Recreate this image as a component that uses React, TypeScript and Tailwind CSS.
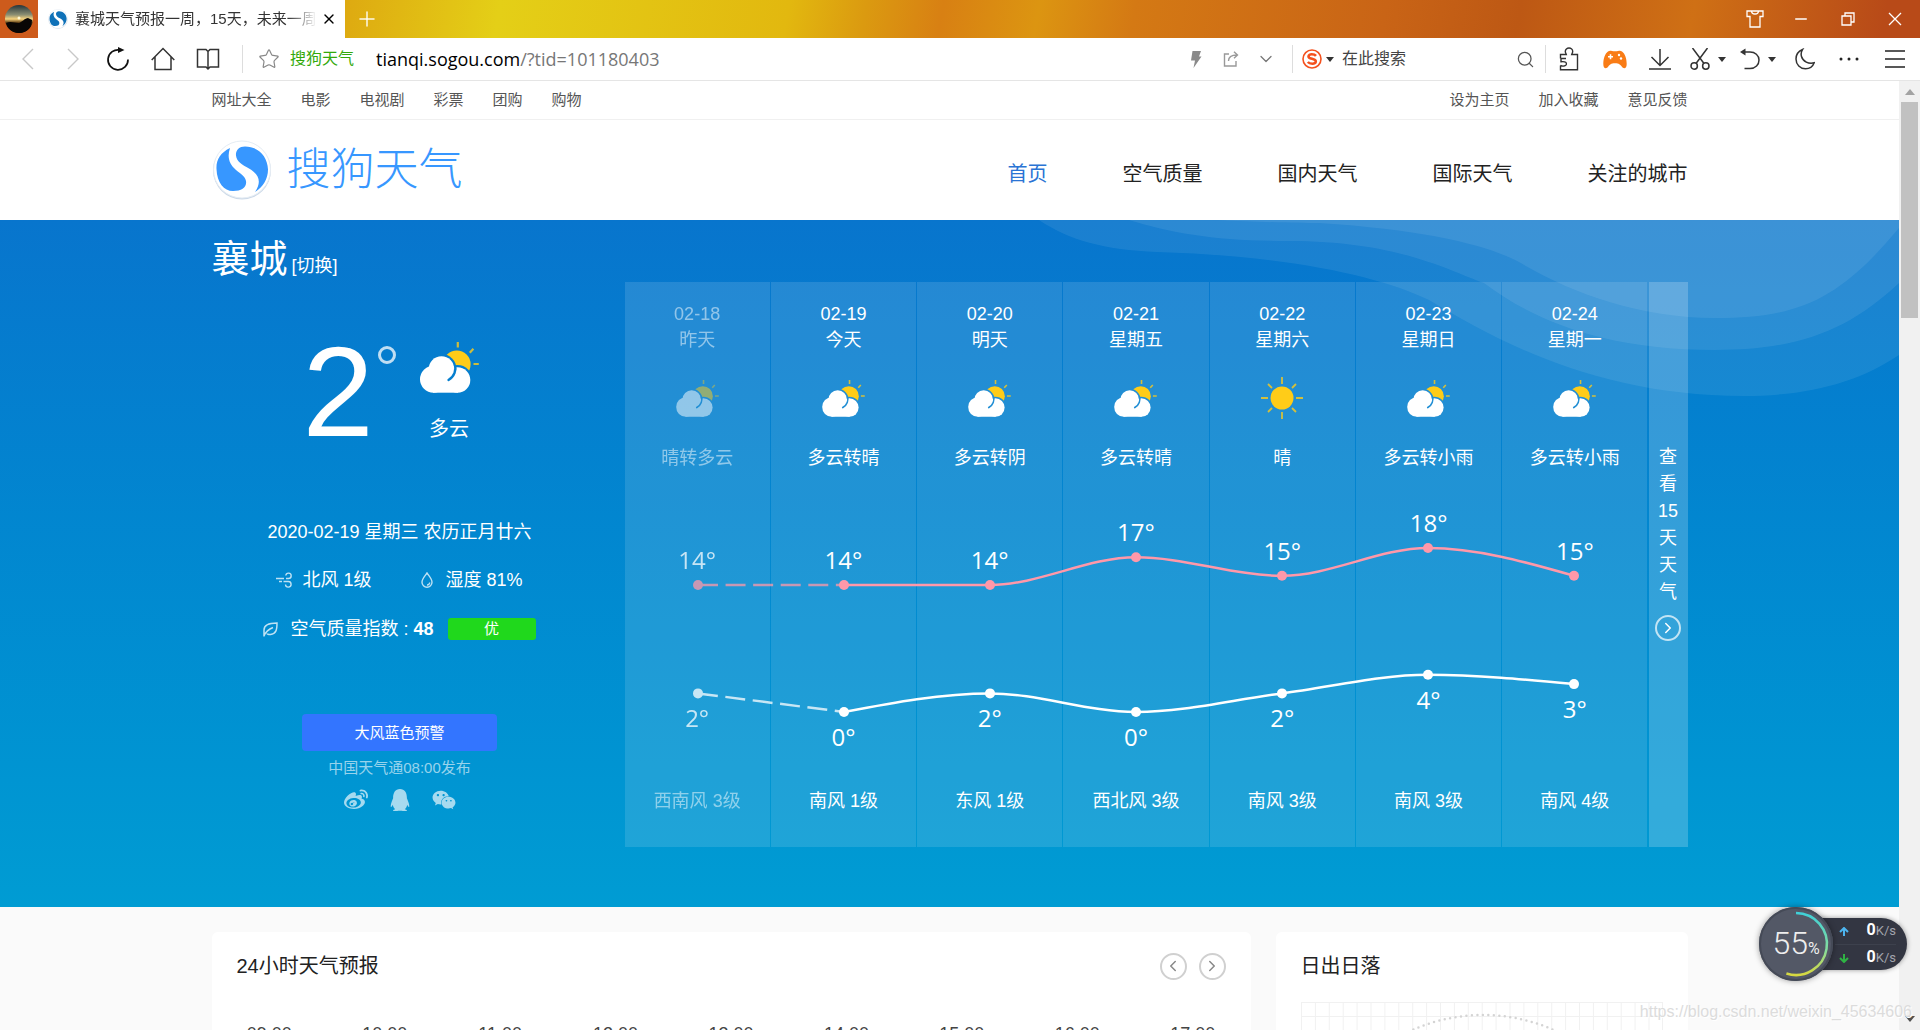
import { useId } from "react";
import type { ReactNode } from "react";
import {
  ChevronDown,
  ChevronLeft,
  ChevronRight,
  Minus,
  Plus,
  Search,
  Star,
  X,
} from "lucide-react";
import { FaQq, FaWeibo, FaWeixin } from "react-icons/fa";

type Sky = "cloudy" | "sunny";

type Day = {
  date: string;
  label: string;
  sky: Sky;
  text: string;
  high: number;
  low: number;
  wind: string;
};

const DAYS: Day[] = [
  { date: "02-18", label: "昨天", sky: "cloudy", text: "晴转多云", high: 14, low: 2, wind: "西南风 3级" },
  { date: "02-19", label: "今天", sky: "cloudy", text: "多云转晴", high: 14, low: 0, wind: "南风 1级" },
  { date: "02-20", label: "明天", sky: "cloudy", text: "多云转阴", high: 14, low: 2, wind: "东风 1级" },
  { date: "02-21", label: "星期五", sky: "cloudy", text: "多云转晴", high: 17, low: 0, wind: "西北风 3级" },
  { date: "02-22", label: "星期六", sky: "sunny", text: "晴", high: 15, low: 2, wind: "南风 3级" },
  { date: "02-23", label: "星期日", sky: "cloudy", text: "多云转小雨", high: 18, low: 4, wind: "南风 3级" },
  { date: "02-24", label: "星期一", sky: "cloudy", text: "多云转小雨", high: 15, low: 3, wind: "南风 4级" },
];

const SITE_LINKS = ["网址大全", "电影", "电视剧", "彩票", "团购", "购物"];
const USER_LINKS = ["设为主页", "加入收藏", "意见反馈"];
const MAIN_NAV = ["首页", "空气质量", "国内天气", "国际天气", "关注的城市"];
const HOURS = ["09:00", "10:00", "11:00", "12:00", "13:00", "14:00", "15:00", "16:00", "17:00"];

// plot geometry, shared by the svg lines and the html labels
const PLOT_W = 1023;
const PLOT_H = 315;
const highY = (t: number) => 113 - (t - 14) * 9.25;
const lowY = (t: number) => 240 - t * 9.3;
const dayX = (i: number) => ((i + 0.5) * PLOT_W) / DAYS.length;

type Point = { x: number; y: number };

// monotone cubic, so the curve never overshoots a day's value
function smoothPath(pts: Point[]) {
  const n = pts.length;
  const slope = pts.slice(1).map((p, i) => (p.y - pts[i].y) / (p.x - pts[i].x));
  const tan = pts.map((_, i) => {
    if (i === 0 || i === n - 1) return 0;
    const a = slope[i - 1];
    const b = slope[i];
    return a * b <= 0 ? 0 : (2 * a * b) / (a + b);
  });
  tan[0] = (3 * slope[0] - tan[1]) / 2;
  tan[n - 1] = (3 * slope[n - 2] - tan[n - 2]) / 2;

  let d = `M${pts[0].x},${pts[0].y}`;
  for (let i = 0; i < n - 1; i++) {
    const dx = (pts[i + 1].x - pts[i].x) / 3;
    d += ` C${pts[i].x + dx},${pts[i].y + tan[i] * dx} ${pts[i + 1].x - dx},${pts[i + 1].y - tan[i + 1] * dx} ${pts[i + 1].x},${pts[i + 1].y}`;
  }
  return d;
}

function CloudSunIcon({ className }: { className: string }) {
  const id = useId();
  return (
    <svg viewBox="0 0 59 51" className={className} aria-hidden="true">
      <mask id={`${id}s`}>
        <rect width="59" height="51" fill="#fff" />
        <circle cx="21.5" cy="27" r="15" />
        <circle cx="37.5" cy="38" r="15" />
      </mask>
      <mask id={`${id}c`}>
        <rect width="59" height="51" fill="#fff" />
        <path d="M34.800 22c1.800 6-.3 12.500-6.300 16" fill="none" stroke="#000" strokeWidth="2.400" strokeLinecap="round" />
      </mask>
      <g fill="#ffcc18" stroke="#ffcc18">
        <circle cx="36.800" cy="22.300" r="13.800" stroke="none" mask={`url(#${id}s)`} />
        <path d="M37.800 0v5.500M49.800 10.800l3.600-4M53.500 22h5.300" strokeWidth="2.200" strokeOpacity=".8" fill="none" />
      </g>
      <g fill="#fff" mask={`url(#${id}c)`}>
        <circle cx="13.500" cy="37.200" r="13.500" />
        <circle cx="21.500" cy="27" r="12.800" />
        <circle cx="37.500" cy="38" r="12.800" />
        <path d="M13 30h25v20.700H13z" />
      </g>
    </svg>
  );
}

function SunIcon({ className }: { className: string }) {
  return (
    <svg viewBox="0 0 42 42" className={className} aria-hidden="true">
      <circle cx="21" cy="21" r="11.500" fill="#ffcc18" />
      <path
        d="M21 0v7M21 35v7M0 21h7M35 21h7M7 7l4 4M31 31l4 4M7 35l4-4M31 11l4-4"
        stroke="#ffcc18"
        strokeOpacity=".8"
        strokeWidth="1.800"
      />
    </svg>
  );
}

function SogouMark({ className, color }: { className: string; color: string }) {
  return (
    <svg viewBox="0 0 60 60" className={className} aria-hidden="true">
      <circle cx="30" cy="30.500" r="29" fill="#ccd9e8" />
      <circle cx="30" cy="29.500" r="28.500" fill="#fff" stroke="#e6edf4" />
      <path
        fill={color}
        d="M18 8C8 13 4 20 4.500 29 5 43 12 51 21 51c9 0 14-4 13-10-1-5-5-7-10-11-7-6-9-13-6-22zM33 6.500c-6 0-9.500 4-9 9 .5 6 6 9 13 13 10 6 13 13 6 23.500 8-5 13-13 13-22.500C55.500 16 46 6.500 33 6.500z"
      />
    </svg>
  );
}

function Caret() {
  return (
    <svg viewBox="0 0 8 5" className="h-[5px] w-2" aria-hidden="true">
      <path d="M0 0h8L4 5z" fill="#333" />
    </svg>
  );
}

function ToolButton({ label, width = "w-[46px]", children }: { label: string; width?: string; children: ReactNode }) {
  return (
    <button type="button" aria-label={label} className={`flex h-full shrink-0 items-center justify-center ${width}`}>
      {children}
    </button>
  );
}

function TabBar() {
  return (
    <div className="flex h-[38px] shrink-0 bg-[linear-gradient(100deg,#dda510_17%,#e4cf17_26%,#e2b80f_41%,#db9a10_45%,#d88013_49%,#dc9511_54%,#d47914_59%,#c96416_72%,#bd5814_79%,#cf7015_88%,#b84a18_98%)]">
      <button type="button" aria-label="账号" className="flex w-[38px] items-center justify-center bg-[#cd5b1c]">
        <svg viewBox="0 0 28 28" className="size-7" aria-hidden="true">
          <defs>
            <linearGradient id="sunset" x2="0" y2="1">
              <stop offset="0" stopColor="#24343a" />
              <stop offset=".35" stopColor="#8c8f73" />
              <stop offset=".5" stopColor="#f6d27c" />
              <stop offset=".62" stopColor="#6b4a1c" />
              <stop offset=".75" stopColor="#0c0a08" />
            </linearGradient>
          </defs>
          <circle cx="14" cy="14" r="14" fill="url(#sunset)" />
          <path d="M1 18c5-2 8 0 13 0 3-1 6-5 9-5l4 2c0 8-6 13-13 13C8 28 3 24 1 18z" fill="#080605" />
          <circle cx="14" cy="13" r="1.500" fill="#fff7d0" />
        </svg>
      </button>

      <div className="flex w-[307px] items-center bg-white pl-[10px]">
        <SogouMark className="size-5 shrink-0" color="#0f71b8" />
        <span className="ml-[7px] w-[242px] overflow-hidden text-[15px] whitespace-nowrap text-[#333] [mask-image:linear-gradient(90deg,#000_88%,transparent)]">
          襄城天气预报一周，15天，未来一周
        </span>
        <button type="button" aria-label="关闭标签页" className="ml-1">
          <X className="size-4 text-black" strokeWidth={2} />
        </button>
      </div>
      <button type="button" aria-label="新建标签页" className="ml-2.5">
        <Plus className="size-6 text-white/90" strokeWidth={1.5} absoluteStrokeWidth />
      </button>

      <div className="ml-auto flex pr-0.5 text-white">
        <ToolButton label="皮肤">
          <svg viewBox="0 0 18 18" className="size-[18px]" fill="none" stroke="currentColor" strokeWidth="1.300" aria-hidden="true">
            <path d="M1 1h16v5.500h-3V17H4V6.500H1zM5.500 1c0 4 7 4 7 0" />
          </svg>
        </ToolButton>
        <ToolButton label="最小化">
          <Minus className="size-[18px]" strokeWidth={2} />
        </ToolButton>
        <ToolButton label="还原" width="w-[48px]">
          <svg viewBox="0 0 14 14" className="size-3.5" fill="none" stroke="currentColor" strokeWidth="1.300" aria-hidden="true">
            <path d="M1 4h9v9H1zM4 4V1h9v9h-3" />
          </svg>
        </ToolButton>
        <ToolButton label="关闭">
          <svg viewBox="0 0 14 14" className="size-3.5" stroke="currentColor" strokeWidth="1.300" aria-hidden="true">
            <path d="M1 1l12 12M13 1L1 13" />
          </svg>
        </ToolButton>
      </div>
    </div>
  );
}

function Toolbar() {
  return (
    <div className="flex h-[43px] shrink-0 items-center border-b border-[#e5e5e5] bg-white pr-0.5 pl-[5px] text-[#333]">
      <ToolButton label="后退" width="w-[45px]">
        <svg viewBox="0 0 12 22" className="h-[22px] w-3" fill="none" stroke="#c8c8c8" strokeWidth="1.400" aria-hidden="true">
          <path d="M11 1L1 11l10 10" />
        </svg>
      </ToolButton>
      <ToolButton label="前进" width="w-[45px]">
        <svg viewBox="0 0 12 22" className="h-[22px] w-3" fill="none" stroke="#c8c8c8" strokeWidth="1.400" aria-hidden="true">
          <path d="M1 1l10 10L1 21" />
        </svg>
      </ToolButton>
      <ToolButton label="刷新" width="w-[45px]">
        <svg viewBox="0 0 24 24" className="size-6" fill="none" stroke="#111" strokeWidth="1.700" aria-hidden="true">
          <path d="M22 12.500A10 10 0 1 1 14 3" />
          <path d="M12 0l6.500 3L12 6z" fill="#111" stroke="none" />
        </svg>
      </ToolButton>
      <ToolButton label="主页" width="w-[45px]">
        <svg viewBox="0 0 24 24" className="size-6" fill="none" stroke="currentColor" strokeWidth="1.500" aria-hidden="true">
          <path d="M.700 13L12 1.500 23.300 13M4 10v12.500h16V10" />
        </svg>
      </ToolButton>
      <ToolButton label="收藏夹" width="w-[45px]">
        <svg viewBox="0 0 24 24" className="size-6" fill="none" stroke="currentColor" strokeWidth="1.500" aria-hidden="true">
          <path d="M12 4.500L10 2.500H1.500V20H10l2 2 2-2h8.500V2.500H14zM12 4.500V22" />
        </svg>
      </ToolButton>
      <span className="ml-3 h-7 w-px bg-[#ddd]" />

      <button type="button" aria-label="收藏" className="ml-[15px]">
        <Star className="size-[22px] text-[#888]" strokeWidth={1.3} strokeLinejoin="miter" />
      </button>
      <span className="ml-2.5 text-base text-[#33a90b]">搜狗天气</span>
      <div className="ml-[22px] flex-1 font-[Open_Sans,Noto_Sans_CJK_SC,sans-serif] text-lg whitespace-nowrap text-[#777]">
        <span className="text-black">tianqi.sogou.com</span>/?tid=101180403
      </div>

      <ToolButton label="极速模式" width="w-[35px]">
        <svg viewBox="0 0 12 17" className="h-[17px] w-3" fill="#8a8a8a" aria-hidden="true">
          <path d="M2.500 0H11L9 5.500h2.500L3.500 17 5 9.500H1z" />
        </svg>
      </ToolButton>
      <ToolButton label="分享" width="w-[35px]">
        <svg viewBox="0 0 16 16" className="size-4" fill="none" stroke="#999" strokeWidth="1.400" aria-hidden="true">
          <path d="M6 3H1.500v12H13v-5M5.500 10c0-4 3-6 8.500-6M11 .700L14.500 4 11 7.300" />
        </svg>
      </ToolButton>
      <ToolButton label="更多地址" width="w-[35px]">
        <ChevronDown className="size-5 text-[#777]" strokeWidth={1.5} />
      </ToolButton>
      <span className="ml-[9px] h-7 w-px bg-[#ddd]" />

      <button type="button" aria-label="选择搜索引擎" className="ml-[9px] flex items-center gap-1">
        <svg viewBox="0 0 20 20" className="size-5" fill="none" stroke="#f4511e" aria-hidden="true">
          <circle cx="10" cy="10" r="9" strokeWidth="1.600" />
          <path d="M14 6.800C12.500 5 6.500 4.300 6.500 7.500c0 3 7.300 1.600 7.300 4.900 0 3.300-6.300 2.600-8 .6" strokeWidth="2.600" />
        </svg>
        <Caret />
      </button>
      <input
        type="text"
        aria-label="搜索"
        defaultValue="在此搜索"
        className="ml-2 w-[174px] bg-transparent text-base text-[#444] outline-none"
      />
      <button type="button" aria-label="开始搜索">
        <Search className="size-[19px] text-[#555]" strokeWidth={1.6} />
      </button>
      <span className="ml-2.5 h-7 w-px bg-[#ddd]" />

      <ToolButton label="扩展">
        <svg viewBox="0 0 20 24" className="h-6 w-5" fill="none" stroke="currentColor" strokeWidth="1.400" aria-hidden="true">
          <path d="M1.500 11.500V7.500h5.800c-.3-1-1-1.700-1-3C6.300 2.700 8 1 10 1s3.700 1.700 3.700 3.500c0 1.300-.7 2-1 3h5.800v15.300h-17v-4.300" />
          <path d="M1.500 11.500H7M2 11.500v3.300c5-.6 5.800 1 5.300 2.700-.6 1.800-3.600 2-5.800 1" />
        </svg>
      </ToolButton>
      <ToolButton label="游戏" width="w-[45px]">
        <svg viewBox="0 0 24 19" className="h-[19px] w-6" aria-hidden="true">
          <path
            d="M5 1.500C7 0 8 1.200 12 1.200S17 0 19 1.500c3 2 4.700 7 4.700 12.500 0 5-3.200 5.200-5 2.500-1.500-2-2.500-3.300-6.700-3.300s-5.200 1.300-6.700 3.300C3.500 19.200.3 19 .3 14 .3 8.500 2 3.500 5 1.500z"
            fill="#f97c16"
          />
          <path d="M7.500 4.200v5M5 6.700h5" stroke="#fff" strokeWidth="1.600" />
          <circle cx="16" cy="5" r="1.200" fill="#fff" />
          <circle cx="18" cy="8.500" r="1.200" fill="#fff" />
        </svg>
      </ToolButton>
      <ToolButton label="下载">
        <svg viewBox="0 0 22 22" className="size-[22px]" fill="none" stroke="currentColor" strokeWidth="1.500" aria-hidden="true">
          <path d="M11 1v16M2.500 9l8.500 8.500L19.500 9M0 21h22" />
        </svg>
      </ToolButton>
      <ToolButton label="截图" width="w-[50px]">
        <span className="flex items-center gap-2">
          <svg viewBox="0 0 20 22" className="h-[22px] w-5" fill="none" stroke="currentColor" strokeWidth="1.500" aria-hidden="true">
            <path d="M2.500 0L14 15.500M17.500 0L6 15.500" />
            <circle cx="4.200" cy="18" r="3.200" />
            <circle cx="15.800" cy="18" r="3.200" />
          </svg>
          <Caret />
        </span>
      </ToolButton>
      <ToolButton label="撤销" width="w-[50px]">
        <span className="flex items-center gap-2">
          <svg viewBox="0 0 20 22" className="h-[22px] w-5" fill="none" stroke="currentColor" strokeWidth="1.500" aria-hidden="true">
            <path d="M3 4h7c5 0 9 3.300 9 8s-3.500 8.500-9 8.500H4.500" />
            <path d="M5.500.500v7L0 4z" fill="currentColor" stroke="none" />
          </svg>
          <Caret />
        </span>
      </ToolButton>
      <ToolButton label="夜间模式" width="w-[43px]">
        <svg viewBox="0 0 20 22" className="h-[22px] w-5" fill="none" stroke="currentColor" strokeWidth="1.500" aria-hidden="true">
          <path d="M7.500 1.500C3.500 3.200 1 6.700 1 11c0 5.500 4.200 9.800 9.500 9.800 4 0 7.300-2.300 8.700-6-5.700 1.500-11.200-1.300-12.700-6.300-.7-2.500-.3-5 1-7z" />
        </svg>
      </ToolButton>
      <ToolButton label="更多">
        <svg viewBox="0 0 20 4" className="h-1 w-5" fill="#222" aria-hidden="true">
          <circle cx="2" cy="2" r="1.500" />
          <circle cx="10" cy="2" r="1.500" />
          <circle cx="18" cy="2" r="1.500" />
        </svg>
      </ToolButton>
      <ToolButton label="菜单">
        <svg viewBox="0 0 20 18" className="h-[18px] w-5" stroke="#222" strokeWidth="1.500" aria-hidden="true">
          <path d="M0 1h20M0 9h20M0 17h20" />
        </svg>
      </ToolButton>
    </div>
  );
}

function SiteHeader() {
  return (
    <header className="bg-white">
      <div className="border-b border-[#f0f0f0]">
        <div className="mx-auto flex h-[38px] w-full max-w-[1476px] items-center justify-between text-[15px] text-[#555]">
          <nav className="flex gap-[29px]">
            {SITE_LINKS.map((l) => (
              <a key={l} href="#">{l}</a>
            ))}
          </nav>
          <nav className="flex gap-[29px]">
            {USER_LINKS.map((l) => (
              <a key={l} href="#">{l}</a>
            ))}
          </nav>
        </div>
      </div>

      <div className="mx-auto flex h-[100px] w-full max-w-[1476px] items-center justify-between">
        <a href="#" className="flex items-center gap-[15px]">
          <SogouMark className="size-[60px]" color="#3797ff" />
          <span className="text-[44px] leading-[60px] font-light text-[#3797ff]">搜狗天气</span>
        </a>
        <nav className="flex gap-[75px] pt-2 text-xl text-[#222]">
          {MAIN_NAV.map((l, i) => (
            <a key={l} href="#" className={i === 0 ? "text-[#2a74d4]" : undefined}>
              {l}
            </a>
          ))}
        </nav>
      </div>
    </header>
  );
}

function CurrentWeather() {
  return (
    <section className="flex w-[376px] shrink-0 flex-col pt-[47px] text-lg leading-7">
      <div className="flex h-[125px] pl-[91px]">
        <span className="w-[70px] text-[128px] leading-[125px]">2</span>
        <span className="mt-[17px] ml-[5px] size-[18px] rounded-full border-3 border-white/75" />
        <div className="ml-[24px] flex flex-col items-center pt-[13px]">
          <CloudSunIcon className="h-[51px] w-[59px]" />
          <span className="mt-[22px] text-xl">多云</span>
        </div>
      </div>
      <p className="mt-16 text-center">2020-02-19 星期三 农历正月廿六</p>
      <div className="mt-5 flex items-center justify-center">
        <svg viewBox="0 0 16 16" className="size-4" fill="none" stroke="#fff" strokeOpacity=".75" strokeWidth="1.400" aria-hidden="true">
          <path d="M0 6.500h8M10 6.500h2.500a2.700 2.700 0 1 0-2.700-3M3 9.500h3M7.500 9.500h4.800a2.800 2.800 0 1 1-2.800 3" />
        </svg>
        <span className="ml-2.5">北风 1级</span>
        <svg viewBox="0 0 12 16" className="ml-[50px] h-4 w-3" fill="none" stroke="#fff" strokeOpacity=".75" strokeWidth="1.400" aria-hidden="true">
          <path d="M6 1C4 4 1 7 1 10.200a5 5 0 0 0 10 0C11 7 8 4 6 1zM8.700 10.500A2.500 2.500 0 0 1 6 13" />
        </svg>
        <span className="ml-3">湿度 81%</span>
      </div>
      <div className="mt-[21px] flex items-center justify-center">
        <svg viewBox="0 0 15 15" className="size-[15px]" fill="none" stroke="#fff" strokeOpacity=".75" strokeWidth="1.500" aria-hidden="true">
          <path d="M1 14.500V8c0-4.500 4-7 13-7 0 7-1 11-6.500 11.500-2 .2-3.500-.5-3.500-1M1 14c2-5 5-7 9-8.500" />
        </svg>
        <span className="ml-3">
          空气质量指数 : <b>48</b>
        </span>
        <span className="ml-3.5 h-[22px] w-[88px] rounded-[3px] bg-[#20d81c] text-center text-[15px] leading-[22px]">优</span>
      </div>
      <button type="button" className="mt-[71px] h-[37px] w-[195px] self-center rounded bg-[#3375ff] text-[15px]">
        大风蓝色预警
      </button>
      <p className="mt-[5px] text-center text-[15px] leading-6 text-white/60">中国天气通08:00发布</p>
      <div className="mt-2 flex items-center justify-center gap-[21px] text-white/65">
        <a href="#" aria-label="微博"><FaWeibo className="size-6" /></a>
        <a href="#" aria-label="QQ"><FaQq className="size-[22px]" /></a>
        <a href="#" aria-label="微信"><FaWeixin className="size-6" /></a>
      </div>
    </section>
  );
}

function TemperatureLines() {
  const highs = DAYS.map((d, i) => ({ x: dayX(i), y: highY(d.high) }));
  const lows = DAYS.map((d, i) => ({ x: dayX(i), y: lowY(d.low) }));
  const series = [
    { pts: highs, color: "#ff98a9" },
    { pts: lows, color: "#ffffff" },
  ];
  return (
    <svg
      viewBox={`0 0 ${PLOT_W} ${PLOT_H}`}
      preserveAspectRatio="none"
      className="pointer-events-none absolute top-[190px] left-0 h-[315px] w-full pr-0.5"
      aria-hidden="true"
    >
      {series.map(({ pts, color }) => (
        <g key={color} fill={color} stroke={color} strokeWidth="2.500">
          {/* yesterday is faded and dashed */}
          <g opacity=".75">
            <path d={`M${pts[0].x},${pts[0].y}L${pts[1].x},${pts[1].y}`} strokeDasharray="20 7.600" />
            <circle cx={pts[0].x} cy={pts[0].y} r="5" stroke="none" />
          </g>
          <path d={smoothPath(pts.slice(1))} fill="none" />
          {pts.slice(1).map((p) => (
            <circle key={p.x} cx={p.x} cy={p.y} r="5" stroke="none" />
          ))}
        </g>
      ))}
    </svg>
  );
}

function DayColumn({ day, past }: { day: Day; past: boolean }) {
  return (
    <li className="flex-1 bg-white/[0.12] pt-5 pb-8 text-center">
      <div className={past ? "opacity-50" : undefined}>
        <p className="leading-6">{day.date}</p>
        <p className="leading-7">{day.label}</p>
        <div className="mt-[22px] flex h-11 items-center justify-center">
          {day.sky === "sunny" ? <SunIcon className="size-[42px]" /> : <CloudSunIcon className="h-[37px] w-[43px]" />}
        </div>
        <p className="mt-6 leading-7">{day.text}</p>
      </div>
      <div
        className={`relative h-[315px] font-[Open_Sans,sans-serif] text-2xl leading-8 ${past ? "opacity-75" : ""}`}
      >
        <span className="absolute inset-x-0" style={{ top: highY(day.high) - 41 }}>{day.high}°</span>
        <span className="absolute inset-x-0" style={{ top: lowY(day.low) + 9 }}>{day.low}°</span>
      </div>
      <p className={`leading-7 ${past ? "opacity-50" : ""}`}>{day.wind}</p>
    </li>
  );
}

function Forecast() {
  return (
    <section className="flex min-w-0 flex-1 text-lg">
      <div className="relative min-w-0 flex-1">
        <ul className="flex gap-px pr-px">
          {DAYS.map((d, i) => (
            <DayColumn key={d.date} day={d} past={i === 0} />
          ))}
        </ul>
        <TemperatureLines />
      </div>
      <a href="#" className="flex w-[39px] flex-col items-center bg-white/20 pt-[162px] leading-[27px]">
        <span className="w-5 text-center">查看</span>
        <span>15</span>
        <span className="w-5 text-center">天天气</span>
        <span className="mt-[9px] flex size-[26px] items-center justify-center rounded-full border-2 border-white/70">
          <ChevronRight className="size-[18px]" strokeWidth={2} />
        </span>
      </a>
    </section>
  );
}

function Banner() {
  return (
    <div className="relative bg-linear-to-b from-[#0875cd] to-[#009cd3] text-white">
      <svg viewBox="0 0 900 180" className="absolute top-0 right-0 h-[180px] w-[900px]" fill="#fff" fillOpacity=".08" aria-hidden="true">
        <path d="M40 0C70 20 105 30 158 32c132 4 222 24 272 48 70 42 170 96 315 96 65 0 115-14 155-41V0z" />
        <path d="M130 0c45 14 90 21 160 21 110 0 160 30 195 42 45 34 115 67 231 67 84 0 134-20 184-67V0z" />
        <path d="M218 0c42 2 82 3 102 3 110 7 170 23 200 39 50 30 120 56 196 56 84 0 124-18 184-90V0z" />
      </svg>
      <div className="relative mx-auto w-full max-w-[1476px] pb-[60px]">
        <div className="flex h-[62px] items-baseline gap-1 pt-2">
          <h1 className="text-[38px] leading-[62px]">襄城</h1>
          <a href="#" className="text-lg">[切换]</a>
        </div>
        <div className="flex gap-[37px]">
          <CurrentWeather />
          <Forecast />
        </div>
      </div>
    </div>
  );
}

function RoundButton({ label, children }: { label: string; children: ReactNode }) {
  return (
    <button
      type="button"
      aria-label={label}
      className="flex size-[27px] items-center justify-center rounded-full border-2 border-[#d0d0d0] text-[#888]"
    >
      {children}
    </button>
  );
}

function Cards() {
  return (
    <div className="mx-auto flex w-full max-w-[1476px] gap-[25px] pt-[25px] text-[#222]">
      <section className="h-80 flex-1 rounded-md bg-white px-[25px] pt-5">
        <div className="flex h-7 items-center justify-between">
          <h2 className="text-xl">24小时天气预报</h2>
          <div className="flex gap-3">
            <RoundButton label="上一页">
              <ChevronLeft className="size-[18px]" strokeWidth={2} />
            </RoundButton>
            <RoundButton label="下一页">
              <ChevronRight className="size-[18px]" strokeWidth={2} />
            </RoundButton>
          </div>
        </div>
        <ol className="mt-[42px] -mr-[25px] -ml-[25px] flex text-lg leading-6 text-[#444]">
          {HOURS.map((h) => (
            <li key={h} className="flex-1 text-center">{h}</li>
          ))}
        </ol>
      </section>

      <section className="h-80 w-[412px] rounded-md bg-white px-[25px] pt-5">
        <h2 className="text-xl leading-7">日出日落</h2>
        <svg viewBox="0 0 362 182" className="mt-[22px] h-[182px] w-full" fill="none" aria-hidden="true">
          <defs>
            <pattern id="cells" width="13.900" height="14" patternUnits="userSpaceOnUse">
              <path d="M.5 14V.5H14" stroke="#f1f1f1" />
            </pattern>
          </defs>
          <rect width="362" height="182" fill="url(#cells)" />
          <path d="M361.500 0v182" stroke="#f1f1f1" />
          <circle cx="182" cy="187" r="174" stroke="#d4d4d4" strokeWidth="2.500" strokeDasharray="0 5.500" strokeLinecap="round" />
        </svg>
      </section>
    </div>
  );
}

// desktop speed meter floating above the browser
function SpeedMeter() {
  return (
    <aside className="absolute right-[13px] bottom-[49px] flex h-[74px] items-center text-white">
      <div className="relative z-10 flex size-[74px] items-center justify-center rounded-full bg-[#535866] shadow-[0_0_6px_#0006]">
        <svg viewBox="0 0 74 74" className="absolute inset-0 size-full" fill="none" aria-hidden="true">
          <defs>
            <linearGradient id="arc" x2="0" y2="1">
              <stop offset="0" stopColor="#3fd0d8" />
              <stop offset=".6" stopColor="#86dc9c" />
              <stop offset="1" stopColor="#d8d940" />
            </linearGradient>
          </defs>
          <circle cx="37" cy="37" r="36" stroke="#454a57" strokeWidth="2" />
          <path d="M37 6a31 31 0 1 1-9.600 60.500" stroke="url(#arc)" strokeWidth="2.500" />
        </svg>
        <span className="relative font-[Roboto,sans-serif] text-[32px] leading-8 font-light text-[#eee]">
          55<span className="text-base font-normal">%</span>
        </span>
      </div>
      <dl className="-ml-9 flex h-[52px] w-[110px] flex-col rounded-r-full bg-[#333642] pr-[11px] pl-[38px] font-[Roboto,sans-serif] text-[13px] leading-[26px] shadow-[0_0_5px_#0006]">
        <div className="flex items-center justify-between border-b border-[#3d414d]">
          <dt aria-label="上传" className="pl-1 text-[#4db4ee]">
            <svg viewBox="0 0 10 9" className="h-[9px] w-2.5" fill="none" stroke="currentColor" strokeWidth="2" aria-hidden="true"><path d="M5 9V1M1 5l4-4 4 4" /></svg>
          </dt>
          <dd className="leading-[26px] text-[#a2a5ae]"><b className="text-base text-white">0</b>K/s</dd>
        </div>
        <div className="flex items-center justify-between">
          <dt aria-label="下载" className="pl-1 text-[#2fb344]">
            <svg viewBox="0 0 10 9" className="h-[9px] w-2.5" fill="none" stroke="currentColor" strokeWidth="2" aria-hidden="true"><path d="M5 0v8M1 4l4 4 4-4" /></svg>
          </dt>
          <dd className="text-[#a2a5ae]"><b className="text-base text-white">0</b>K/s</dd>
        </div>
      </dl>
    </aside>
  );
}

function ScrollRail() {
  return (
    <div className="flex w-[21px] shrink-0 flex-col items-center bg-[#f1f1f1]">
      <svg viewBox="0 0 10 6" className="mt-2 h-1.5 w-2.5" fill="#a3a3a3" aria-hidden="true"><path d="M0 6h10L5 0z" /></svg>
      <div className="mt-[7px] h-[216px] w-[17px] bg-[#c1c1c1]" />
      <svg viewBox="0 0 10 6" className="mt-auto mb-2 h-1.5 w-2.5" fill="#505050" aria-hidden="true"><path d="M0 0h10L5 6z" /></svg>
    </div>
  );
}

export default function App() {
  return (
    <div className="relative flex h-screen flex-col overflow-hidden bg-white font-[Liberation_Sans,Noto_Sans_CJK_SC,sans-serif]">
      <TabBar />
      <Toolbar />
      <div className="flex min-h-0 flex-1">
        <main className="min-w-0 flex-1 overflow-hidden bg-[#fafafa]">
          <SiteHeader />
          <Banner />
          <Cards />
        </main>
        <ScrollRail />
      </div>
      <SpeedMeter />
      <span className="absolute right-2 bottom-1.5 text-base leading-6 text-[#dcdcdc] [text-shadow:1px_1px_0_#fff]">
        https://blog.csdn.net/weixin_45634606
      </span>
    </div>
  );
}
